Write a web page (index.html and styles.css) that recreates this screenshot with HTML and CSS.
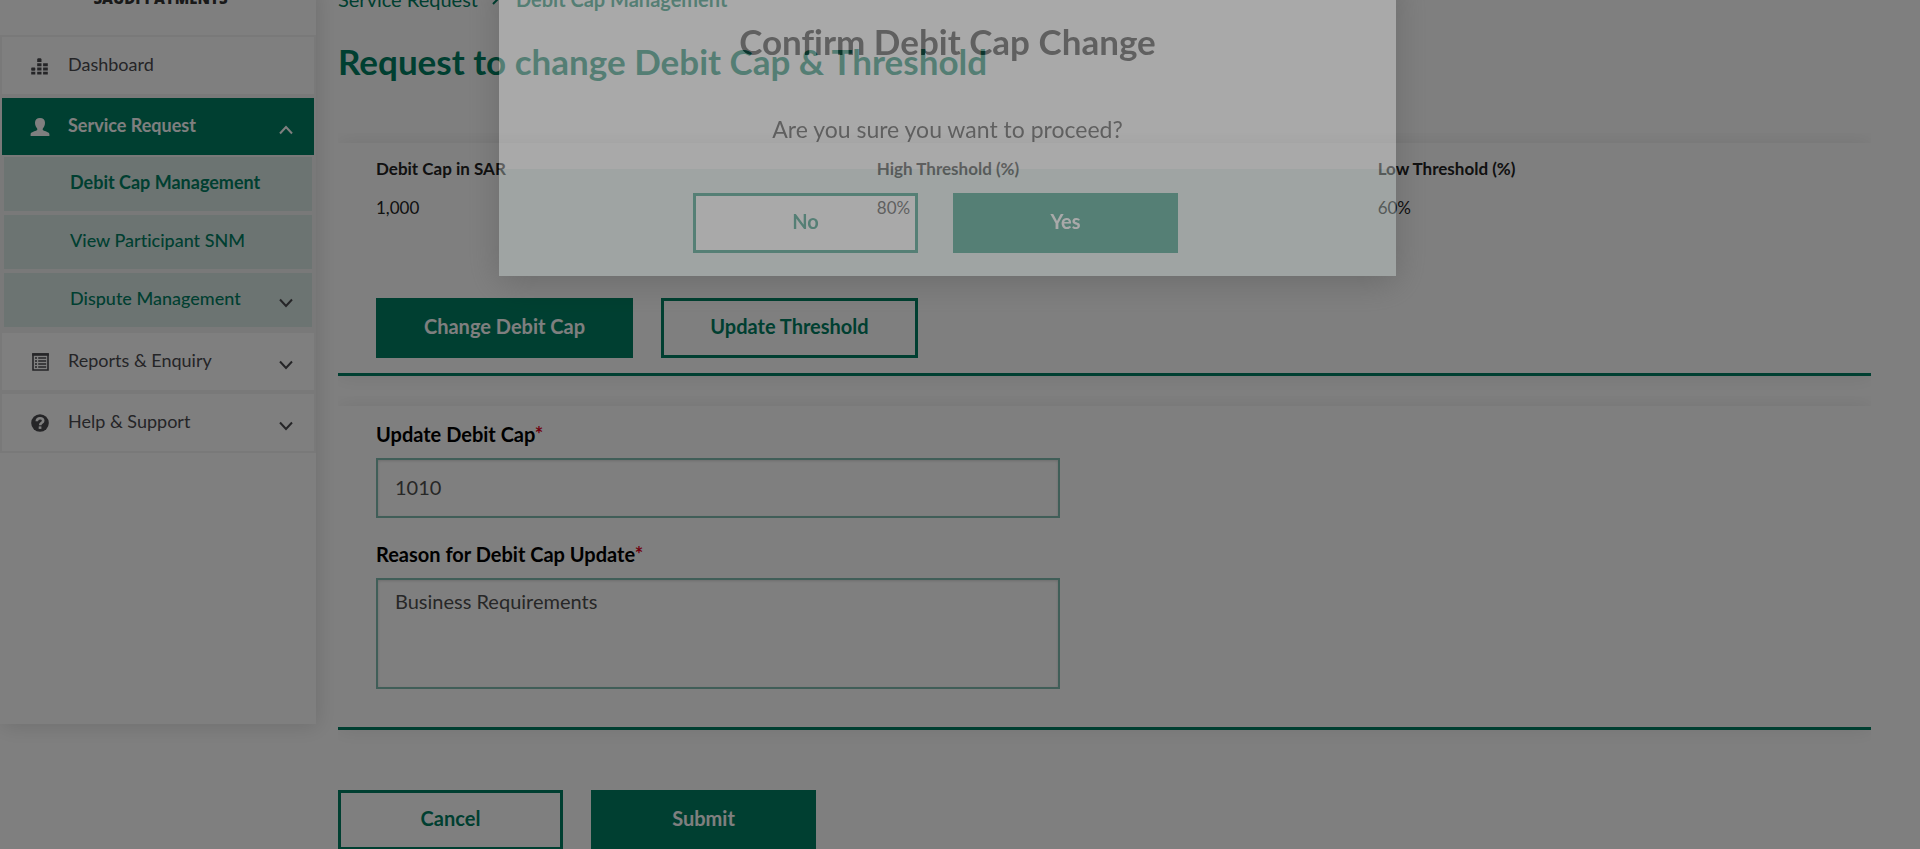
FILE: index.html
```html
<!DOCTYPE html>
<html lang="en">
<head>
<meta charset="utf-8">
<meta name="viewport" content="width=device-width, initial-scale=1">
<title>Debit Cap Management</title>
<link rel="stylesheet" href="styles.css">
</head>
<body>
<div class="page">
  <aside class="sidebar">
    <div class="logo">SAUDI PAYMENTS</div>
    <nav class="menu" aria-label="Main">
      <div class="menu-item">
        <a class="menu-link" href="#">
          <svg class="menu-icon" viewBox="0 0 20 20" fill="currentColor" aria-hidden="true"><path d="M2 11.500h2.500q.8 0 .8.8v1.700q0 .8-.8.800h-2.500q-.8 0-.8-.8v-1.700q0-.8.8-.8zM1.200 15.800h4.100v2.800h-4.100zM7.200 15.800h4.300v2.800h-4.300zM13.100 15.800h4.700v2.800h-4.700zM7.200 11.500h4.300v3.100h-4.300zM13.100 11.500h4.700v3.100h-4.700zM7.200 7.200h4.300v3.100h-4.300zM13.100 7.200h4.700v3.100h-4.700zM8 2.200h2.700l.8.800v3h-4.300v-3z"/></svg>
          <span class="menu-text">Dashboard</span>
        </a>
      </div>
      <div class="menu-item">
        <a class="menu-link menu-link-active" href="#">
          <svg class="menu-icon" viewBox="0 0 20 20" fill="currentColor" aria-hidden="true"><path d="M10 1C6.800 1 5 2.800 5 5.700c0 2.600 1 4.200 2 5.500.6.900.3 2-.6 2.400C3.500 14.900.6 15.400.6 17.300V19h18.800v-1.700c0-1.900-2.900-2.400-5.800-3.700-.9-.4-1.200-1.500-.6-2.400 1-1.300 2-2.900 2-5.500C15 2.800 13.200 1 10 1z"/></svg>
          <span class="menu-text">Service Request</span>
          <svg class="chevron" viewBox="0 0 14 10" fill="none" stroke="currentColor" stroke-width="2" aria-hidden="true"><path d="M1 8.500l6-6.500 6 6.500"/></svg>
        </a>
        <div class="submenu">
          <a class="submenu-link submenu-link-active" href="#"><span class="menu-text">Debit Cap Management</span></a>
          <a class="submenu-link" href="#"><span class="menu-text">View Participant SNM</span></a>
          <a class="submenu-link" href="#">
            <span class="menu-text">Dispute Management</span>
            <svg class="chevron chevron-dark" viewBox="0 0 14 10" fill="none" stroke="currentColor" stroke-width="2" aria-hidden="true"><path d="M1 1.500l6 6.500 6-6.500"/></svg>
          </a>
        </div>
      </div>
      <div class="menu-item">
        <a class="menu-link" href="#">
          <svg class="menu-icon" viewBox="0 0 20 20" aria-hidden="true"><path fill="none" stroke="currentColor" stroke-width="1.600" d="M3 2h15v16h-15z"/><path fill="currentColor" d="M2.200 1.200h16.600v2.600H2.200z"/><path stroke="currentColor" stroke-width="1.500" d="M5 6h2M5 9h2M5 12h2M5 15h2M8.200 6h8M8.200 9h8M8.200 12h8M8.200 15h8"/></svg>
          <span class="menu-text">Reports &amp; Enquiry</span>
          <svg class="chevron" viewBox="0 0 14 10" fill="none" stroke="currentColor" stroke-width="2" aria-hidden="true"><path d="M1 1.500l6 6.500 6-6.500"/></svg>
        </a>
      </div>
      <div class="menu-item">
        <a class="menu-link" href="#">
          <svg class="menu-icon" viewBox="0 0 20 20" aria-hidden="true"><circle cx="10" cy="10" r="8.800" fill="currentColor"/><path fill="none" stroke="#fff" stroke-width="2.600" d="M6.800 8.200c0-2 1.300-3 3.200-3s3.200 1 3.200 2.500c0 2.200-3 2-3 4.500"/><path fill="#fff" d="M8.700 13.400h2.700v2.500h-2.700z"/></svg>
          <span class="menu-text">Help &amp; Support</span>
          <svg class="chevron" viewBox="0 0 14 10" fill="none" stroke="currentColor" stroke-width="2" aria-hidden="true"><path d="M1 1.500l6 6.500 6-6.500"/></svg>
        </a>
      </div>
    </nav>
  </aside>

  <main class="content">
    <nav class="breadcrumb" aria-label="Breadcrumb">
      <a href="#">Service Request</a>
      <svg class="crumb-arrow" viewBox="0 0 8 12" fill="none" stroke="currentColor" stroke-width="2" aria-hidden="true"><path d="M1 1l5 5-5 5"/></svg>
      <a href="#" class="crumb-current">Debit Cap Management</a>
    </nav>
    <h1 class="page-title">Request to change Debit Cap &amp; Threshold</h1>

    <section class="card">
      <dl class="facts">
        <div><dt>Debit Cap in SAR</dt><dd>1,000</dd></div>
        <div><dt>High Threshold (%)</dt><dd>80%</dd></div>
        <div><dt>Low Threshold (%)</dt><dd>60%</dd></div>
      </dl>
      <div class="actions">
        <button type="button" class="btn btn-wide btn-solid">Change Debit Cap</button>
        <button type="button" class="btn btn-wide">Update Threshold</button>
      </div>
    </section>

    <form class="update-form">
      <section class="card card-form">
        <label class="field-label" for="cap">Update Debit Cap<span class="required">*</span></label>
        <input class="field" id="cap" type="text" value="1010">
        <label class="field-label" for="reason">Reason for Debit Cap Update<span class="required">*</span></label>
        <textarea class="field field-area" id="reason">Business Requirements</textarea>
      </section>
      <div class="actions form-actions">
        <button type="button" class="btn">Cancel</button>
        <button type="submit" class="btn btn-solid">Submit</button>
      </div>
    </form>
  </main>
</div>

<div class="backdrop"></div>
<div class="modal-layer">
  <div class="modal" role="dialog" aria-modal="true" aria-labelledby="modal-title">
    <div class="modal-body">
      <h2 class="modal-title" id="modal-title">Confirm Debit Cap Change</h2>
      <p class="modal-text">Are you sure you want to proceed?</p>
    </div>
    <div class="modal-footer">
      <button type="button" class="btn">No</button>
      <button type="button" class="btn btn-solid">Yes</button>
    </div>
  </div>
</div>
</body>
</html>
```
FILE: styles.css
```css
:root {
  --green: #007f62;
  --ink: #4a4a4f;
  --line: #f3f3f3;
}

* {
  box-sizing: border-box;
}

html,
body {
  height: 100%;
}

body {
  margin: 0;
  overflow: hidden;
  background: #fff;
  color: #222;
  font-family: Lato, "Open Sans", sans-serif;
  font-size: 18px;
  font-variant-ligatures: none;
  line-height: 24px;
}

a {
  color: inherit;
  text-decoration: none;
}

.page {
  display: flex;
  align-items: flex-start;
  margin-top: -12px;
}

/* Sidebar */
.sidebar {
  flex: none;
  width: 316px;
  min-height: 736px;
  background: #fff;
  box-shadow: 2px 3px 20px rgba(0, 0, 0, 0.13);
}

.logo {
  height: 47px;
  padding-left: 5px;
  color: #333;
  font-family: "Open Sans", sans-serif;
  font-size: 15px;
  font-weight: 800;
  line-height: 20px;
  text-align: center;
}

.menu-item {
  border: 2px solid var(--line);
}

.menu-link,
.submenu-link {
  display: flex;
  align-items: center;
  height: 57px;
  padding: 0 21px 0 28px;
  color: var(--ink);
}

.menu-link-active {
  background: var(--green);
  color: #fff;
  font-weight: 700;
}

.menu-icon {
  flex: none;
  width: 20px;
  height: 20px;
  margin-right: 18px;
}

.menu-text {
  flex: 1;
  padding-bottom: 4px;
}

.chevron {
  flex: none;
  width: 14px;
  height: 10px;
  margin-top: 6px;
}

.submenu-link {
  height: 58px;
  padding: 0 19px 0 66px;
  border: 2px solid var(--line);
  background: #d9e8e5;
  color: var(--green);
  font-weight: 500;
}

.submenu-link-active {
  font-weight: 700;
}

.chevron-dark {
  color: var(--ink);
}

/* Content */
.content {
  flex: 1;
  padding: 0 49px 0 22px;
}

.breadcrumb {
  display: flex;
  align-items: center;
  height: 22px;
  color: var(--green);
  font-size: 20px;
}

.crumb-arrow {
  width: 8px;
  height: 12px;
  margin: 0 16px 0 14px;
}

.crumb-current {
  font-weight: 700;
}

.page-title {
  margin: 30px 0 61px;
  color: var(--green);
  font-size: 35px;
  font-weight: 700;
  line-height: 42px;
}

.card {
  padding: 14px 0 15px 38px;
  border-bottom: 3px solid var(--green);
  box-shadow: 0 0 20px rgba(0, 0, 0, 0.09);
  clip-path: inset(-10px 0 -20px 0);
}

.facts {
  display: grid;
  grid-template-columns: 33.5% 33.5% 1fr;
  margin: 0;
  font-size: 17px;
}

.facts dt {
  font-weight: 700;
}

.facts dd {
  margin: 15px 0 0;
}

.actions {
  display: flex;
  gap: 28px;
}

.card .actions {
  margin-top: 78px;
}

.btn {
  width: 225px;
  height: 60px;
  padding: 0 0 4px;
  border: 3px solid var(--green);
  background: #fff;
  color: var(--green);
  font-family: inherit;
  font-size: 20px;
  font-weight: 700;
}

.btn-wide {
  width: 257px;
}

.btn-solid {
  background: var(--green);
  color: #fff;
}

.card-form {
  margin-top: 30px;
  padding: 16px 0 38px 38px;
}

.field-label {
  display: block;
  color: #000;
  font-size: 20px;
  font-weight: 700;
}

.required {
  color: #e0001b;
}

.field {
  display: block;
  width: 100%;
  max-width: 684px;
  height: 60px;
  margin: 12px 0 24px;
  padding: 0 17px 2px;
  border: 2px solid #80bdb0;
  background: #fff;
  box-shadow: inset 0 1px 3px rgba(0, 0, 0, 0.15);
  color: #4f4f4f;
  font-family: inherit;
  font-size: 20px;
}

.field-area {
  height: 111px;
  margin-bottom: 0;
  padding: 9px 17px;
  line-height: 24px;
  resize: none;
}

.form-actions {
  margin-top: 60px;
}

/* Dialog */
.backdrop {
  position: fixed;
  inset: 0;
  background: rgba(0, 0, 0, 0.5);
}

.modal-layer {
  position: fixed;
  inset: 0;
  padding-right: 25px;
}

.modal {
  max-width: 897px;
  margin: -24px auto 0;
  background: #fff;
  box-shadow: 0 6px 32px rgba(0, 0, 0, 0.5);
  opacity: 0.33;
}

.modal-body {
  padding: 44px 0 24px;
  color: #222;
  text-align: center;
}

.modal-title {
  margin: 0;
  font-size: 35px;
  font-weight: 700;
  line-height: 42px;
}

.modal-text {
  margin: 51px 0 0;
  font-size: 23px;
  line-height: 32px;
}

.modal-footer {
  display: flex;
  justify-content: center;
  gap: 35px;
  padding: 24px 24px 23px 0;
  background: #e0f0ed;
}
```
